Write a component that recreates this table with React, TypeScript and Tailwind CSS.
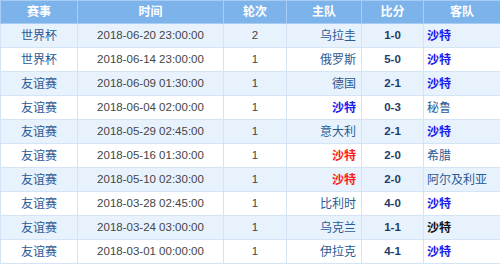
import React from "react";

type Row = {
  event: string;
  time: string;
  round: string;
  home: string;
  score: string;
  away: string;
  homeKind?: "red";
  awayKind?: "blue" | "black";
};

const rows: Row[] = [
  { event: "世界杯", time: "2018-06-20 23:00:00", round: "2", home: "乌拉圭", score: "1-0", away: "沙特", awayKind: "blue" },
  { event: "世界杯", time: "2018-06-14 23:00:00", round: "1", home: "俄罗斯", score: "5-0", away: "沙特", awayKind: "blue" },
  { event: "友谊赛", time: "2018-06-09 01:30:00", round: "1", home: "德国", score: "2-1", away: "沙特", awayKind: "blue" },
  { event: "友谊赛", time: "2018-06-04 02:00:00", round: "1", home: "沙特", score: "0-3", away: "秘鲁", homeKind: undefined },
  { event: "友谊赛", time: "2018-05-29 02:45:00", round: "1", home: "意大利", score: "2-1", away: "沙特", awayKind: "blue" },
  { event: "友谊赛", time: "2018-05-16 01:30:00", round: "1", home: "沙特", score: "2-0", away: "希腊", homeKind: "red" },
  { event: "友谊赛", time: "2018-05-10 02:30:00", round: "1", home: "沙特", score: "2-0", away: "阿尔及利亚", homeKind: "red" },
  { event: "友谊赛", time: "2018-03-28 02:45:00", round: "1", home: "比利时", score: "4-0", away: "沙特", awayKind: "blue" },
  { event: "友谊赛", time: "2018-03-24 03:00:00", round: "1", home: "乌克兰", score: "1-1", away: "沙特", awayKind: "black" },
  { event: "友谊赛", time: "2018-03-01 00:00:00", round: "1", home: "伊拉克", score: "4-1", away: "沙特", awayKind: "blue" },
];

const font = { fontFamily: '"Liberation Sans", "Noto Sans CJK SC", sans-serif' };

function homeClass(r: Row, i: number) {
  if (r.homeKind === "red") return "text-[#ff1a1a] font-bold";
  if (i === 3) return "text-[#1a1aee] font-bold";
  return "text-[#2a5a95]";
}

function awayClass(r: Row) {
  if (r.awayKind === "blue") return "text-[#1a1aee] font-bold";
  if (r.awayKind === "black") return "text-[#111] font-bold";
  return "text-[#2a5a95]";
}

export default function App() {
  return (
    <div className="w-[500px] h-[268px] bg-white" style={font}>
      <table className="w-[500px] border-collapse table-fixed text-[11.5px]">
        <colgroup>
          <col className="w-[77px]" />
          <col className="w-[146px]" />
          <col className="w-[63px]" />
          <col className="w-[75px]" />
          <col className="w-[62px]" />
          <col className="w-[77px]" />
        </colgroup>
        <thead>
          <tr className="h-[23px] bg-[#7db3eb] text-white font-bold text-[12px]">
            {["赛事", "时间", "轮次", "主队", "比分", "客队"].map((h) => (
              <th key={h} className="border border-[#a9cdf2] text-center font-bold p-0">
                {h}
              </th>
            ))}
          </tr>
        </thead>
        <tbody>
          {rows.map((r, i) => (
            <tr key={i} className={`h-[24px] ${i % 2 === 0 ? "bg-[#e8f2fd]" : "bg-white"}`}>
              <td className="border border-[#d3e4f6] text-center text-[12px] text-[#2a5a95] p-0">{r.event}</td>
              <td className="border border-[#d3e4f6] text-center text-[#444] p-0">{r.time}</td>
              <td className="border border-[#d3e4f6] text-center text-[#444] p-0">{r.round}</td>
              <td className={`border border-[#d3e4f6] text-right text-[12px] pr-[5px] p-0 ${homeClass(r, i)}`}>{r.home}</td>
              <td className="border border-[#d3e4f6] text-center font-bold text-[#1f3d66] p-0">{r.score}</td>
              <td className={`border border-[#d3e4f6] text-left text-[12px] pl-[3px] ${awayClass(r)}`}>{r.away}</td>
            </tr>
          ))}
        </tbody>
      </table>
    </div>
  );
}
